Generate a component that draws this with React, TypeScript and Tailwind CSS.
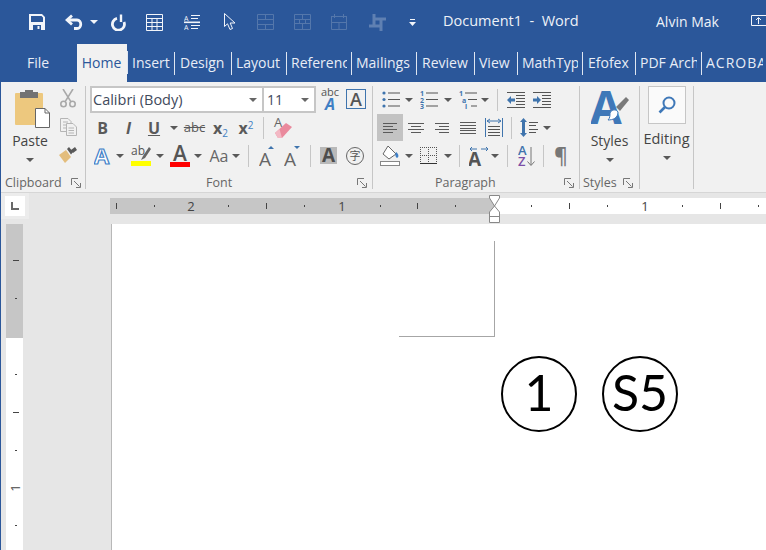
import React from "react";

const UI = "font-['Open_Sans','Noto_Sans',sans-serif]";

function Arrow({ className = "", color = "#595959" }: { className?: string; color?: string }) {
  return (
    <svg width="8" height="4" viewBox="0 0 8 4" className={"flex-none " + className}>
      <path d="M0 0H8L4 4Z" fill={color} />
    </svg>
  );
}

function Launcher({ className = "" }: { className?: string }) {
  return (
    <svg width="10" height="10" viewBox="0 0 10 10" className={"flex-none " + className} fill="none" stroke="#777">
      <path d="M.5 7V.5H7" />
      <path d="M3 3L8.5 8.5M9.5 5V9.5H5" />
    </svg>
  );
}

function Sep({ className = "h-[103px] mt-[4px]" }: { className?: string }) {
  return <div className={"w-px flex-none bg-[#c6c6c6] " + className} />;
}

function Lines({ rows, w = 18, h = 16, color = "#5a5a5a" }: { rows: [number, number][]; w?: number; h?: number; color?: string }) {
  return (
    <svg width={w} height={h} viewBox={`0 0 ${w} ${h}`}>
      {rows.map((r, i) => (
        <rect key={i} x={r[0]} y={Math.round(1 + (i * (h - 3)) / (rows.length - 1))} width={r[1]} height="1" fill={color} />
      ))}
    </svg>
  );
}

const TABS: [string, string, string][] = [
  ["Insert", "w-[47px]", "pl-[4px]"],
  ["Design", "w-[57px]", "pl-[5px]"],
  ["Layout", "w-[55px]", "pl-[4px]"],
  ["References", "w-[65px]", "pl-[4px]"],
  ["Mailings", "w-[65px]", "pl-[4px]"],
  ["Review", "w-[58px]", "pl-[5px]"],
  ["View", "w-[43px]", "pl-[4px]"],
  ["MathType", "w-[65px]", "pl-[4px]"],
  ["Efofex", "w-[53px]", "pl-[5px]"],
  ["PDF Architect", "w-[66px]", "pl-[4px]"],
];

function TitleBar() {
  const dis = "#5477ab";
  return (
    <div className="h-[44px] flex-none flex items-center bg-[#2b579a] text-[#eef2f8] overflow-hidden">
      <svg width="16" height="16" viewBox="0 0 16 16" className="ml-[28px] flex-none">
        <path fillRule="evenodd" d="M0 0H13L16 3V16H0ZM2 2V8H14V3.5L12.5 2ZM4 11V16H12V11ZM8.5 12H10.5V15H8.5Z" fill="#f2f5fa" />
      </svg>
      <svg width="18" height="16" viewBox="0 0 18 16" fill="none" stroke="#f2f5fa" strokeWidth="2.8" className="ml-[20px] flex-none">
        <path d="M7 1.5L2 6L7 10.5" />
        <path d="M2 6H12C17 6 17 14.5 12 14.5H9" />
      </svg>
      <Arrow className="ml-[7px]" color="#f2f5fa" />
      <svg width="16" height="17" viewBox="0 0 16 17" fill="none" stroke="#f2f5fa" strokeWidth="2.8" className="ml-[12px] flex-none">
        <path d="M7 4.4A6 6 0 1 0 14 8" />
        <path d="M11 0.5V8" strokeWidth="2.4" />
      </svg>
      <svg width="17" height="17" viewBox="0 0 17 17" fill="none" stroke="#f2f5fa" className="ml-[20px] flex-none">
        <path d="M.5.5H16.5V16.5H.5ZM.5 4.5H16.5M.5 8.5H16.5M.5 12.5H16.5M6 4.5V16.5M11 4.5V16.5" />
      </svg>
      <svg width="16" height="16" viewBox="0 0 16 16" className="ml-[21px] flex-none" fill="#f2f5fa">
        <text x="0" y="6.5" fontSize="7" fontFamily="Open Sans">A</text>
        <text x="0" y="15.5" fontSize="7" fontFamily="Open Sans">A</text>
        <rect x="7" y="1" width="9" height="1" />
        <rect x="7" y="4" width="7" height="1" />
        <rect x="0" y="7.5" width="16" height="1.6" />
        <rect x="7" y="11" width="9" height="1" />
        <rect x="7" y="14" width="7" height="1" />
      </svg>
      <svg width="12" height="18" viewBox="0 0 12 18" fill="#2b579a" stroke="#f2f5fa" className="ml-[24px] flex-none">
        <path d="M.5.5V13.5L3.5 10.8L6 16.5L8.5 15.5L6.2 10H11Z" />
      </svg>
      <svg width="17" height="16" viewBox="0 0 17 16" fill="none" stroke={dis} className="ml-[21px] flex-none">
        <path d="M.5.5H16.5V15.5H.5ZM.5 5.5H16.5M.5 10.5H16.5M8.5.5V5.5M8.5 10.5V15.5" />
      </svg>
      <svg width="17" height="16" viewBox="0 0 17 16" fill="none" stroke={dis} className="ml-[20px] flex-none">
        <path d="M.5.5H16.5V15.5H.5ZM.5 5.5H16.5M.5 9.5H16.5M8.5.5V5.5M5.5 5.5V9.5M11.5 5.5V9.5M8.5 9.5V15.5" />
      </svg>
      <svg width="16" height="16" viewBox="0 0 16 16" fill="none" stroke={dis} className="ml-[20px] flex-none">
        <path d="M0 2.5H16M3.5 0V4M12.5 0V4M.5 2.5V15.5H15.5V2.5M.5 8.5H15.5M8 8.5V15.5" />
      </svg>
      <svg width="17" height="17" viewBox="0 0 17 17" fill="none" stroke="#5f80b2" strokeWidth="3" className="ml-[22px] flex-none">
        <path d="M5 5H12V12H5ZM0 12H5M12 5H17M5 0V5M12 12V17" />
      </svg>
      <svg width="7" height="7" viewBox="0 0 7 7" fill="#f2f5fa" className="ml-[23px] flex-none">
        <rect x="1" y="0" width="5" height="1" />
        <path d="M0 3H7L3.5 7Z" />
      </svg>
      <div className={"w-[213px] ml-[27px] flex-none whitespace-pre text-[14.5px] -mt-[2px] " + UI}>Document1  -  Word</div>
      <div className={"w-[95px] flex-none text-[14px] -mt-[2px] " + UI}>Alvin Mak</div>
      <svg width="15" height="11" viewBox="0 0 15 11" fill="none" stroke="#f2f5fa" className="flex-none -mt-[4px]">
        <path d="M.5 10.5V.5H15M.5 10.5H15M7.5 9V3M5 5L7.5 2.5L10 5" />
      </svg>
    </div>
  );
}

function TabBar() {
  return (
    <div className={"h-[38px] flex-none flex items-stretch bg-[#2b579a] text-[14px] text-[#e8edf6] " + UI}>
      <div className="w-[76px] flex-none flex items-center justify-center pb-[2px] pr-[2px]">File</div>
      <div className="w-[50px] flex-none flex items-center justify-center bg-[#f1f1f1] text-[#2b579a] pb-[2px] pr-[1px]">Home</div>
      <div className="w-px h-[23px] mt-[7px] bg-[#dfe6f1]" />
      {TABS.map(([t, w, p]) => (
        <div key={t} className={"flex-none flex items-center " + w}>
          <div className={"flex-1 min-w-0 overflow-hidden whitespace-nowrap mr-[4px] pb-[2px] " + p}>{t}</div>
          <div className="w-px h-[23px] flex-none bg-[#dfe6f1]" />
        </div>
      ))}
      <div className="flex-1 min-w-0 flex items-center overflow-hidden whitespace-nowrap ml-[4px] mr-[3px] pb-[2px] tracking-[1px]">ACROBAT</div>
    </div>
  );
}

function Clipboard() {
  return (
    <div className="w-[84px] flex-none flex flex-col">
      <div className="h-[92px] flex">
        <div className="w-[58px] flex-none flex flex-col items-center pt-[8px]">
          <svg width="36" height="38" viewBox="0 0 36 38" className="ml-[6px] flex-none">
            <rect x="0" y="3" width="28" height="32" rx="1" fill="#edc87e" />
            <path d="M5 2H10V0H18V2H23V8H5Z" fill="#737373" />
            <path d="M20.5 18.5H30L34.5 23V37.5H20.5Z" fill="#fff" stroke="#666" />
            <path d="M30 18.5V23H34.5" fill="none" stroke="#666" />
          </svg>
          <div className="mt-[3px] h-[20px] leading-[20px] text-[14px] text-[#444]">Paste</div>
          <Arrow className="mt-[7px]" />
        </div>
        <div className="w-[18px] flex-none flex flex-col items-center pt-[7px]">
          <svg width="16" height="19" viewBox="0 0 16 19" fill="none" stroke="#a9a9a9" strokeWidth="1.6">
            <circle cx="3.5" cy="15" r="2.7" />
            <circle cx="12.5" cy="15" r="2.7" />
            <path d="M5 12.8L13 0M11 12.8L3 0" />
          </svg>
          <svg width="17" height="18" viewBox="0 0 17 18" fill="#f1f1f1" stroke="#b5b5b5" className="mt-[10px]">
            <path d="M.5.5H8L11 3.5V13.5H.5ZM3 4H8M3 7H8M3 10H8" />
            <path d="M6.5 5.5H13L16.5 9V17.5H6.5ZM8.5 10H14M8.5 12.5H14M8.5 15H14" />
          </svg>
          <svg width="18" height="16" viewBox="0 0 18 16" className="mt-[11px]">
            <path d="M0 8L7 3L12 10L6 16Z" fill="#e3bd7c" />
            <path d="M8 2L10 0L14 5L12 7.5ZM12 3L16 0L18 3L14 6Z" fill="#595959" />
          </svg>
        </div>
      </div>
      <div className="h-[18px] flex items-center pl-[4px] pr-[4px]">
        <span className="text-[12.5px] text-[#666]">Clipboard</span>
        <Launcher className="ml-auto" />
      </div>
    </div>
  );
}

function Cell({ w, children, className = "" }: { w: string; children: React.ReactNode; className?: string }) {
  return <div className={"flex-none flex items-center justify-center h-full " + w + " " + className}>{children}</div>;
}

function FontGroup() {
  return (
    <div className="w-[286px] flex-none flex flex-col">
      <div className="h-[92px] pt-[4px] pl-[4px] flex flex-col">
        <div className="h-[27px] flex items-stretch flex-none">
          <div className="w-[174px] flex-none bg-white border-2 border-[#c6c6c6] flex items-center pl-[1px] pr-[5px] text-[14.5px] text-[#3f4a5c]">
            Calibri (Body)
            <Arrow className="ml-auto" color="#666" />
          </div>
          <div className="w-[52px] flex-none bg-white border-2 border-l-0 border-[#c6c6c6] flex items-center pl-[3px] pr-[5px] text-[14px] text-[#3f4a5c]">
            11
            <Arrow className="ml-auto" color="#666" />
          </div>
          <svg width="20" height="24" viewBox="0 0 20 24" className="ml-[5px] flex-none">
            <text x="0" y="10" fontSize="11" fill="#555" fontFamily="Open Sans">abc</text>
            <text x="4" y="24" fontSize="16" fontWeight="700" fontStyle="italic" fill="#3f7fc4" fontFamily="Open Sans">A</text>
          </svg>
          <div className="ml-[5px] mt-[3px] w-[20px] h-[20px] flex-none border border-[#3f74ad] flex items-center justify-center text-[18px] leading-none font-semibold text-[#555]">A</div>
        </div>
        <div className="h-[26px] mt-[2px] flex-none flex items-center text-[#5a5a5a]">
          <Cell w="w-[25px]" className="text-[16px] font-bold">B</Cell>
          <Cell w="w-[27px]" className="text-[16px] font-bold italic">I</Cell>
          <Cell w="w-[24px]" className="text-[16px] font-bold underline">U</Cell>
          <Cell w="w-[16px]"><Arrow /></Cell>
          <Cell w="w-[25px]" className="text-[13px] line-through">abc</Cell>
          <Cell w="w-[27px]" className="text-[16px] font-bold"><span className="leading-none">x<sub className="text-[10px] font-normal text-[#3f7fc4]">2</sub></span></Cell>
          <Cell w="w-[24px]" className="text-[16px] font-bold"><span className="leading-none">x<sup className="text-[10px] font-normal text-[#3f7fc4]">2</sup></span></Cell>
          <Sep className="ml-[5px] h-[22px]" />
          <Cell w="w-[38px]">
            <svg width="20" height="22" viewBox="0 0 20 22">
              <text x="1" y="10" fontSize="13" fill="#666" fontFamily="Open Sans">A</text>
              <path d="M2 16L13 6L19 10L9 21H5Z" fill="#ea8a9d" />
              <path d="M2 16L5 21H9L6.5 12Z" fill="#f3b8c4" />
            </svg>
          </Cell>
        </div>
        <div className="h-[25px] mt-[2px] flex-none flex items-center text-[#5a5a5a]">
          <Cell w="w-[26px]">
            <svg width="18" height="20" viewBox="0 0 18 20">
              <text x="0" y="18" fontSize="22" fontWeight="700" fill="#fff" stroke="#3f80c8" strokeWidth="1.2" fontFamily="Open Sans">A</text>
            </svg>
          </Cell>
          <Cell w="w-[8px]"><Arrow /></Cell>
          <div className="ml-[5px] w-[24px] flex-none flex flex-col items-center">
            <div className="flex items-end h-[17px] -mt-[1px] w-[20px]">
              <span className="text-[12px] leading-none text-[#555] mb-[4px]">ab</span>
              <svg width="10" height="15" viewBox="0 0 10 15" className="flex-none -ml-[4px]"><path d="M0 14L2 10L8 1L10 3L4 12Z" fill="#666" /></svg>
            </div>
            <div className="w-[20px] h-[5px] bg-[#ffff00]" />
          </div>
          <Cell w="w-[8px]" className="ml-[3px]"><Arrow /></Cell>
          <div className="ml-[4px] w-[24px] flex-none flex flex-col items-center">
            <div className="text-[21px] leading-[17px] h-[17px] font-semibold text-[#555]">A</div>
            <div className="w-[20px] h-[5px] bg-[#ff0000]" />
          </div>
          <Cell w="w-[8px]" className="ml-[2px]"><Arrow /></Cell>
          <Cell w="w-[24px]" className="ml-[5px] text-[16px] text-[#666]">Aa</Cell>
          <Cell w="w-[8px]" className="ml-[1px]"><Arrow /></Cell>
          <Sep className="ml-[8px] h-[22px]" />
          <Cell w="w-[24px]" className="ml-[7px]">
            <svg width="18" height="22" viewBox="0 0 18 22">
              <text x="0" y="21" fontSize="19" fill="#666" fontFamily="Open Sans">A</text>
              <path d="M9 4L12 1L15 4Z" fill="#3f74ad" />
            </svg>
          </Cell>
          <Cell w="w-[24px]" className="ml-[1px]">
            <svg width="18" height="22" viewBox="0 0 18 22">
              <text x="0" y="21" fontSize="19" fill="#666" fontFamily="Open Sans">A</text>
              <path d="M10 1H16L13 4Z" fill="#3f74ad" />
            </svg>
          </Cell>
          <Sep className="ml-[5px] h-[22px]" />
          <div className="ml-[9px] w-[17px] h-[17px] flex-none bg-[#b9b9b9] flex items-center justify-center text-[19px] leading-none font-bold text-[#4d4d4d]">A</div>
          <div className="ml-[9px] w-[18px] h-[18px] flex-none rounded-full border border-[#666] flex items-center justify-center text-[11px] leading-none text-[#555] font-['Noto_Sans_CJK_SC',sans-serif]">字</div>
        </div>
      </div>
      <div className="h-[18px] flex items-center pl-[120px] pr-[5px]">
        <span className="text-[12.5px] text-[#666]">Font</span>
        <Launcher className="ml-auto" />
      </div>
    </div>
  );
}

function Bullets({ kind }: { kind: 0 | 1 | 2 }) {
  return (
    <svg width="18" height="18" viewBox="0 0 18 18" className="flex-none">
      {[2, 8.5, 15].map((y, i) => (
        <g key={i}>
          {kind === 0 && <circle cx="2" cy={y} r="1.6" fill="#3f74ad" />}
          {kind === 1 && <text x="0" y={y + 3} fontSize="7" fontWeight="700" fill="#3f74ad" fontFamily="Open Sans">{i + 1}</text>}
          {kind === 2 && <text x={i * 3} y={y + 3} fontSize="7" fontWeight="700" fill="#3f74ad" fontFamily="Open Sans">{["1", "a", "i"][i]}</text>}
          <rect x={kind === 2 ? 6 + i * 3 : 6} y={y - 0.5} width={kind === 2 ? 12 - i * 3 : 12} height="1" fill="#555" />
        </g>
      ))}
    </svg>
  );
}

function Indent({ right }: { right?: boolean }) {
  return (
    <svg width="18" height="16" viewBox="0 0 18 16" className="flex-none">
      {[0, 3, 6, 9, 12, 15].map((y, i) => (
        <rect key={i} x={i === 0 || i === 5 ? 0 : 9} y={y} width={i === 0 || i === 5 ? 18 : 9} height="1" fill="#555" />
      ))}
      <path d={right ? "M0 6.5H4V4L8 8L4 12V9.5H0Z" : "M8 6.5H4V4L0 8L4 12V9.5H8Z"} fill="#3f74ad" />
    </svg>
  );
}

function Paragraph() {
  return (
    <div className="w-[206px] flex-none flex flex-col">
      <div className="h-[92px] pt-[4px] flex flex-col">
        <div className="h-[27px] flex-none flex items-center pl-[9px]">
          <Bullets kind={0} />
          <Arrow className="ml-[5px]" />
          <div className="ml-[7px]"><Bullets kind={1} /></div>
          <Arrow className="ml-[6px]" />
          <div className="ml-[7px]"><Bullets kind={2} /></div>
          <Arrow className="ml-[4px]" />
          <Sep className="ml-[8px] h-[22px]" />
          <div className="ml-[9px]"><Indent /></div>
          <div className="ml-[8px]"><Indent right /></div>
        </div>
        <div className="h-[27px] mt-[1px] flex-none flex items-center pl-[4px]">
          <Cell w="w-[26px]" className="bg-[#c3c3c3]"><Lines rows={[[0, 14], [0, 10], [0, 14], [0, 10]]} w={14} h={12} /></Cell>
          <Cell w="w-[26px]"><Lines rows={[[0, 16], [3, 10], [0, 16], [3, 10]]} w={16} h={12} /></Cell>
          <Cell w="w-[26px]"><Lines rows={[[0, 14], [4, 10], [0, 14], [4, 10]]} w={14} h={12} /></Cell>
          <Cell w="w-[25px]"><Lines rows={[[0, 16], [0, 16], [0, 16], [0, 16], [0, 16]]} w={16} h={14} /></Cell>
          <svg width="18" height="19" viewBox="0 0 18 19" className="ml-[5px] flex-none">
            <path d="M.5 0V19M17.5 0V19" stroke="#3f74ad" />
            <path d="M2 3H16M5 1L2 3L5 5M13 1L16 3L13 5" stroke="#3f74ad" fill="none" />
            <path d="M3 8.5H15M3 11.5H15M3 14.5H15M3 17.5H15" stroke="#555" />
          </svg>
          <Sep className="ml-[8px] h-[22px]" />
          <svg width="18" height="19" viewBox="0 0 18 19" className="ml-[8px] flex-none">
            <path d="M3.5 0L7 4H5V15H7L3.5 19L0 15H2V4H0Z" fill="#3f74ad" />
            <path d="M9 4.5H18M9 7.5H16M9 11.5H18M9 14.5H16" stroke="#555" />
          </svg>
          <Arrow className="ml-[5px]" />
        </div>
        <div className="h-[25px] mt-[2px] flex-none flex items-center pl-[7px]">
          <svg width="20" height="21" viewBox="0 0 20 21" className="flex-none">
            <path d="M8 1L16 9L9 14L3 9Z" fill="#fff" stroke="#666" />
            <path d="M16 7C19 9 19 12 17 13C15 12 15 9 16 7Z" fill="#3f80c8" />
            <rect x=".5" y="16.5" width="19" height="4" fill="#fff" stroke="#888" />
          </svg>
          <Arrow className="ml-[5px]" />
          <svg width="17" height="17" viewBox="0 0 17 17" fill="none" shapeRendering="crispEdges" className="ml-[7px] flex-none">
            <path d="M0 .5H17M.5 0V17M16.5 0V17M8.5 0V17M0 8.5H17" stroke="#555" strokeDasharray="1 1" />
            <path d="M0 16.5H17" stroke="#333" />
          </svg>
          <Arrow className="ml-[7px]" />
          <Sep className="ml-[7px] h-[22px]" />
          <svg width="20" height="21" viewBox="0 0 20 21" className="ml-[9px] flex-none">
            <path d="M1 4H8M3 2L1 4L3 6M12 4H19M17 2L19 4L17 6" stroke="#3f74ad" fill="none" />
            <text x="-1" y="21" fontSize="19" fontWeight="700" fill="#555" fontFamily="Open Sans">A</text>
          </svg>
          <Arrow className="ml-[2px]" />
          <Sep className="ml-[8px] h-[22px]" />
          <svg width="17" height="23" viewBox="0 0 17 23" className="ml-[10px] flex-none">
            <text x="0" y="11" fontSize="13" fontWeight="600" fill="#3f74ad" fontFamily="Open Sans">A</text>
            <text x="0" y="22" fontSize="13" fontWeight="600" fill="#7b4fa6" fontFamily="Open Sans">Z</text>
            <path d="M13 3V21M9.5 17.5L13 21.5L16.5 17.5" stroke="#777" fill="none" />
          </svg>
          <Sep className="ml-[8px] h-[22px]" />
          <div className="ml-[7px] w-[20px] flex-none text-center text-[21px] leading-none font-semibold text-[#777]">¶</div>
        </div>
      </div>
      <div className="h-[18px] flex items-center pl-[62px] pr-[5px]">
        <span className="text-[12.5px] text-[#666]">Paragraph</span>
        <Launcher className="ml-auto" />
      </div>
    </div>
  );
}

function Styles() {
  return (
    <div className="w-[59px] flex-none flex flex-col">
      <div className="h-[92px] pt-[8px] flex flex-col items-center">
        <svg width="38" height="36" viewBox="0 0 38 36" className="flex-none">
          <text x="-1" y="34" fontSize="46" fontWeight="700" fill="#3f78b8" fontFamily="Open Sans">A</text>
          <path d="M25 17L35 7L38 10L29 21Z" fill="#7a7a7a" />
          <path d="M19 23C21 19 25 19 27 22C27 28 22 30 17 30C19 28 19 26 19 23Z" fill="#fff" stroke="#3f78b8" />
        </svg>
        <div className="mt-[5px] h-[20px] leading-[20px] text-[14px] text-[#444]">Styles</div>
        <Arrow className="mt-[7px]" />
      </div>
      <div className="h-[18px] flex items-center pl-[3px] pr-[6px]">
        <span className="text-[12.5px] text-[#666]">Styles</span>
        <Launcher className="ml-auto" />
      </div>
    </div>
  );
}

function Editing() {
  return (
    <div className="w-[53px] flex-none flex flex-col items-center pt-[4px]">
      <div className="w-[38px] h-[38px] flex-none bg-[#fafafa] border border-[#c6c6c6] flex items-center justify-center">
        <svg width="18" height="18" viewBox="0 0 18 18" fill="none" stroke="#3f78b8">
          <circle cx="11" cy="7" r="5.5" strokeWidth="2" />
          <path d="M7 11L1.5 16.5" strokeWidth="2.6" />
        </svg>
      </div>
      <div className="mt-[5px] h-[20px] leading-[20px] text-[14.5px] text-[#444]">Editing</div>
      <Arrow className="mt-[7px]" />
    </div>
  );
}

function Ribbon() {
  return (
    <div className={"h-[111px] flex-none flex bg-[#f1f1f1] border-b border-[#d6d6d6] " + UI}>
      <Clipboard />
      <Sep />
      <FontGroup />
      <Sep />
      <Paragraph />
      <Sep />
      <Styles />
      <Sep />
      <Editing />
      <Sep />
    </div>
  );
}

function HRuler() {
  const long = [116, 266, 417, 569, 720];
  const short = [154, 228, 304, 380, 455, 531, 607, 682, 758];
  const ox = 110;
  return (
    <svg width="656" height="30" viewBox="0 0 656 30" className="flex-none">
      <rect x="0" y="5" width="385" height="16" fill="#c6c6c6" />
      <rect x="385" y="5" width="271" height="16" fill="#fff" />
      {long.map((x) => <rect key={x} x={x - ox} y="10" width="1" height="6" fill="#444" />)}
      {short.map((x) => <rect key={x} x={x - ox} y="12" width="1" height="2" fill="#444" />)}
      <text x={191 - ox} y="18" fontSize="13" textAnchor="middle" fill="#444" fontFamily="Open Sans">2</text>
      <text x={342 - ox} y="18" fontSize="13" textAnchor="middle" fill="#444" fontFamily="Open Sans">1</text>
      <text x={645 - ox} y="18" fontSize="13" textAnchor="middle" fill="#444" fontFamily="Open Sans">1</text>
      <path d="M379.5 2.5H389.5V5L384.5 13L379.5 5Z" fill="#fff" stroke="#888" />
      <path d="M384.5 13L389.5 19V29.5H379.5V19Z" fill="#fff" stroke="#888" />
      <path d="M379.5 23.5H389.5" stroke="#888" />
    </svg>
  );
}

function VRuler() {
  const ticks: [number, number][] = [[260, 1], [298, 0], [374, 0], [412, 1], [450, 0], [525, 0]];
  return (
    <svg width="17" height="326" viewBox="0 0 17 326" className="flex-none">
      <rect x="0" y="0" width="17" height="114" fill="#c6c6c6" />
      <rect x="0" y="114" width="17" height="212" fill="#fff" />
      {ticks.map(([y, l]) => (
        <rect key={y} x={l ? 7 : 9} y={y - 224} width={l ? 6 : 2} height="1" fill="#444" />
      ))}
      <text x="0" y="0" fontSize="13" textAnchor="middle" fill="#444" fontFamily="Open Sans" transform="translate(14 264) rotate(-90)">1</text>
    </svg>
  );
}

function Circled({ t, className }: { t: string; className: string }) {
  return (
    <div className={"absolute w-[76px] h-[76px] rounded-full border-2 border-black bg-white flex items-center justify-center text-[50px] leading-none text-black font-['Lato',sans-serif] " + className}>
      <span className="-mt-[4px]">{t}</span>
    </div>
  );
}

export default function App() {
  return (
    <div className="w-[766px] h-[550px] overflow-hidden flex flex-col bg-[#f1f1f1] border-l border-[#2b579a]">
      <TitleBar />
      <TabBar />
      <Ribbon />
      <div className="h-[31px] flex-none flex bg-[#e6e6e6]">
        <div className="w-[28px] h-[26px] flex-none bg-[#ececec] pl-[4px] pt-[3px]">
          <div className="w-[20px] h-[20px] bg-white flex items-center justify-center">
            <div className="w-[8px] h-[8px] border-l-2 border-b-2 border-[#696969]" />
          </div>
        </div>
        <div className="w-[81px] flex-none" />
        <HRuler />
      </div>
      <div className="flex-1 min-h-0 flex">
        <div className="w-[110px] flex-none bg-[#e6e6e6] pl-[5px]">
          <VRuler />
        </div>
        <div className="flex-1 bg-white border-l border-[#b8b8b8] relative">
          <div className="absolute left-[287px] top-[17px] w-[96px] h-[96px] border-r border-b border-[#a6a6a6]" />
          <Circled t="1" className="left-[389px] top-[132px]" />
          <Circled t="S5" className="left-[490px] top-[132px]" />
        </div>
      </div>
    </div>
  );
}
